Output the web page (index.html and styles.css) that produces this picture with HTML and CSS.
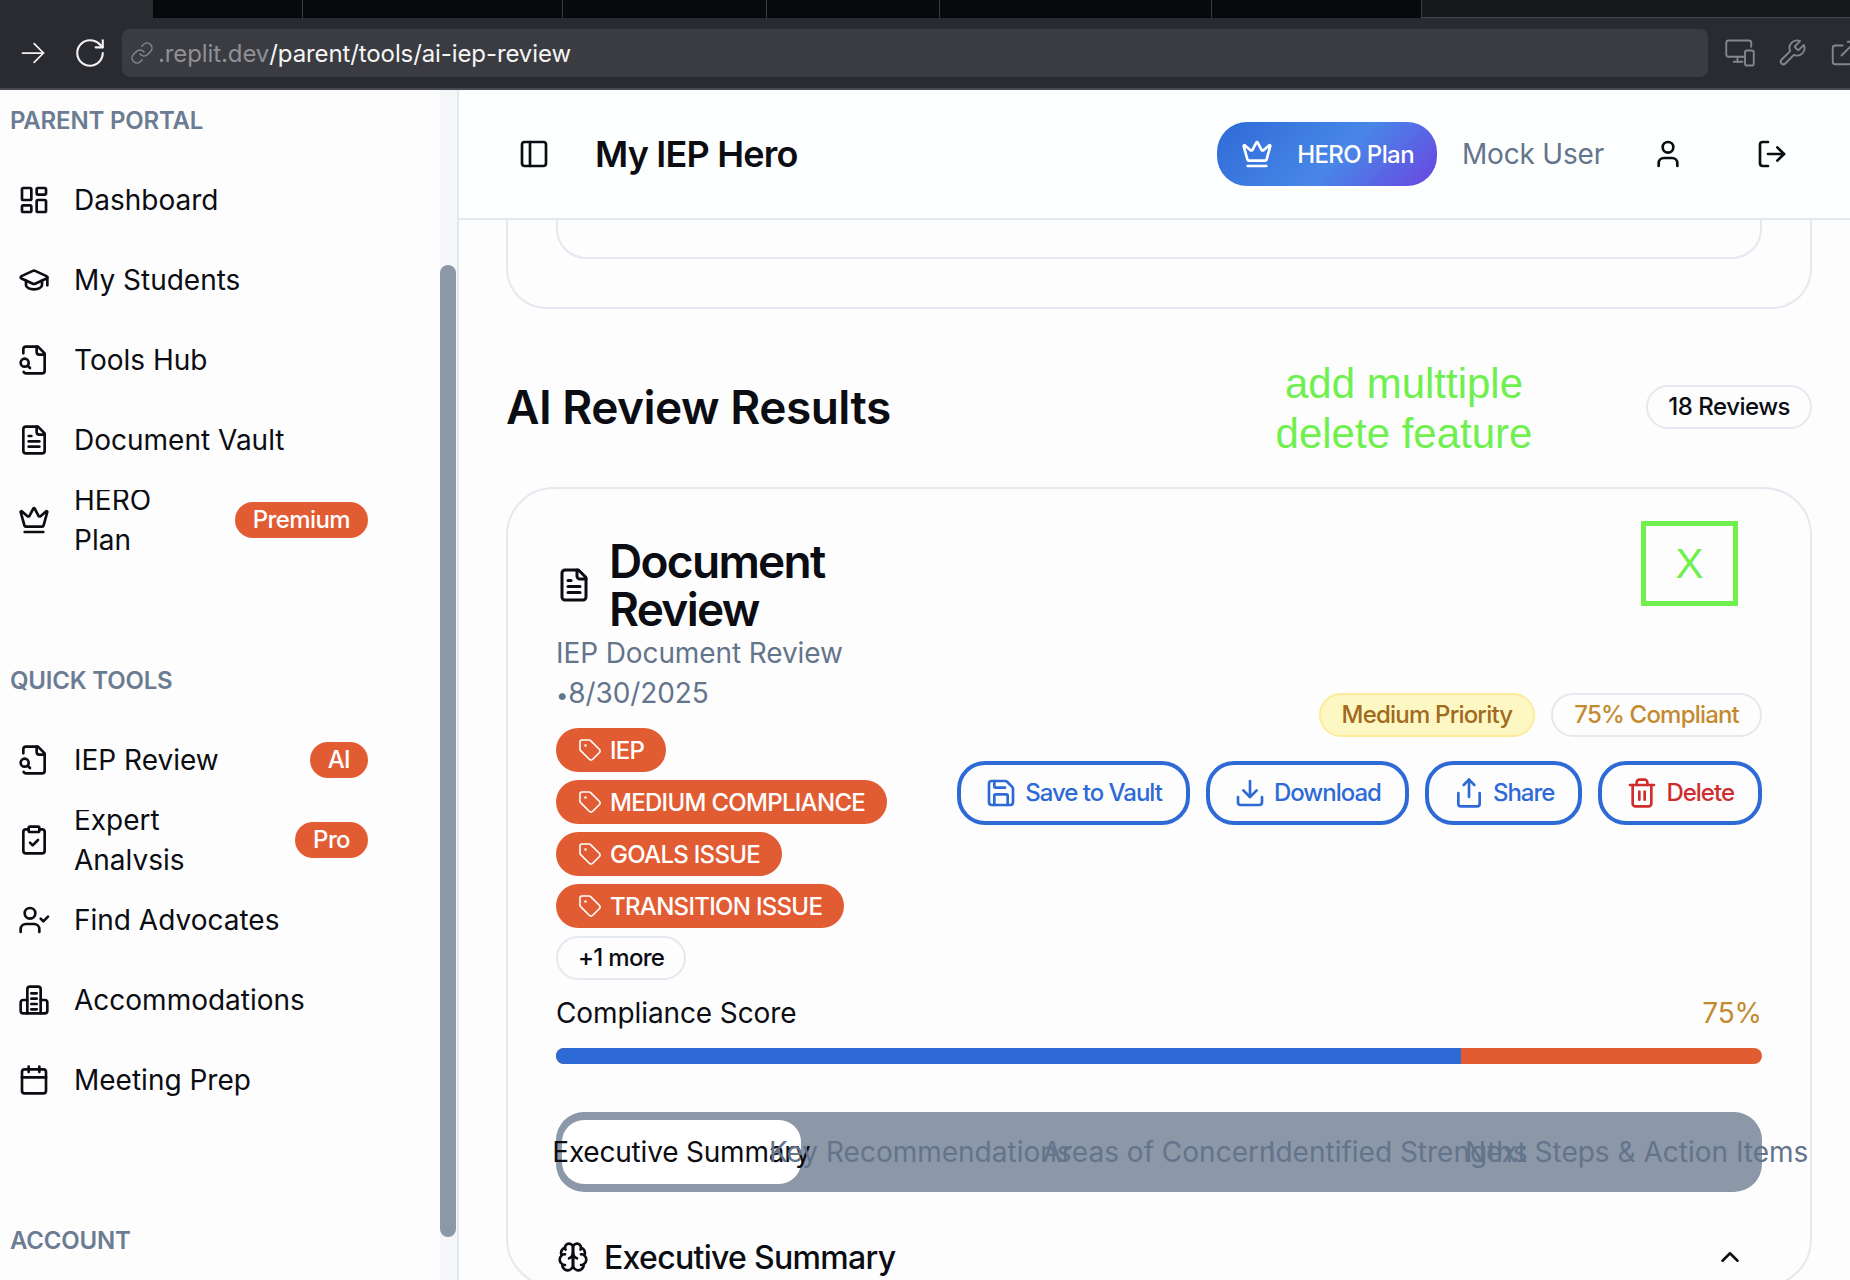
FILE: index.html
```html
<!DOCTYPE html>
<html lang="en">
<head>
    <meta charset="UTF-8">
    <title>My IEP Hero</title>
    <link rel="stylesheet" href="styles.css">
</head>
<body>
    <svg class="icon-defs" xmlns="http://www.w3.org/2000/svg">
        <symbol id="i-dashboard" viewBox="0 0 24 24"><rect x="3" y="3" width="7" height="9" rx="1"/><rect x="14" y="3" width="7" height="5" rx="1"/><rect x="14" y="12" width="7" height="9" rx="1"/><rect x="3" y="16" width="7" height="5" rx="1"/></symbol>
        <symbol id="i-cap" viewBox="0 0 24 24"><path d="M21.42 10.922a1 1 0 0 0-.019-1.838L12.83 5.18a2 2 0 0 0-1.66 0L2.6 9.08a1 1 0 0 0 0 1.832l8.57 3.908a2 2 0 0 0 1.66 0z"/><path d="M22 10v6"/><path d="M6 12.5V16a6 3 0 0 0 12 0v-3.5"/></symbol>
        <symbol id="i-filesearch" viewBox="0 0 24 24"><path d="M14 2v4a2 2 0 0 0 2 2h4"/><path d="M4.268 21a2 2 0 0 0 1.727 1H18a2 2 0 0 0 2-2V7l-5-5H6a2 2 0 0 0-2 2v3"/><path d="m9 18-1.5-1.5"/><circle cx="5" cy="14" r="3"/></symbol>
        <symbol id="i-file" viewBox="0 0 24 24"><path d="M15 2H6a2 2 0 0 0-2 2v16a2 2 0 0 0 2 2h12a2 2 0 0 0 2-2V7Z"/><path d="M14 2v4a2 2 0 0 0 2 2h4"/><path d="M10 9H8"/><path d="M16 13H8"/><path d="M16 17H8"/></symbol>
        <symbol id="i-crown" viewBox="0 0 24 24"><path d="M11.562 3.266a.5.5 0 0 1 .876 0L15.39 8.87a1 1 0 0 0 1.516.294L21.183 5.5a.5.5 0 0 1 .798.519l-2.834 10.246a1 1 0 0 1-.956.734H5.81a1 1 0 0 1-.957-.734L2.02 6.02a.5.5 0 0 1 .798-.519l4.276 3.664a1 1 0 0 0 1.516-.294z"/><path d="M5 21h14"/></symbol>
        <symbol id="i-clipboard" viewBox="0 0 24 24"><rect x="8" y="2" width="8" height="4" rx="1"/><path d="M16 4h2a2 2 0 0 1 2 2v14a2 2 0 0 1-2 2H6a2 2 0 0 1-2-2V6a2 2 0 0 1 2-2h2"/><path d="m9 14 2 2 4-4"/></symbol>
        <symbol id="i-usercheck" viewBox="0 0 24 24"><path d="M16 21v-2a4 4 0 0 0-4-4H6a4 4 0 0 0-4 4v2"/><circle cx="9" cy="7" r="4"/><path d="m17 11 2 2 3.500-3.500"/></symbol>
        <symbol id="i-building" viewBox="0 0 24 24"><path d="M7 22V4a2 2 0 0 1 2-2h6a2 2 0 0 1 2 2v18"/><path d="M7 12H4a2 2 0 0 0-2 2v6a2 2 0 0 0 2 2h16a2 2 0 0 0 2-2v-6a2 2 0 0 0-2-2h-3"/><path d="M10 7h4"/><path d="M10 11h4"/><path d="M10 15h4"/><path d="M10 19h4"/></symbol>
        <symbol id="i-calendar" viewBox="0 0 24 24"><path d="M8 2v4"/><path d="M16 2v4"/><rect x="3" y="4" width="18" height="18" rx="2"/><path d="M3 10h18"/></symbol>
        <symbol id="i-panel" viewBox="0 0 24 24"><rect x="3" y="3" width="18" height="18" rx="2"/><path d="M9 3v18"/></symbol>
        <symbol id="i-user" viewBox="0 0 24 24"><path d="M19 21v-2a4 4 0 0 0-4-4H9a4 4 0 0 0-4 4v2"/><circle cx="12" cy="7" r="4"/></symbol>
        <symbol id="i-logout" viewBox="0 0 24 24"><path d="M9 21H5a2 2 0 0 1-2-2V5a2 2 0 0 1 2-2h4"/><path d="m16 17 5-5-5-5"/><path d="M21 12H9"/></symbol>
        <symbol id="i-tag" viewBox="0 0 24 24"><path d="M12.586 2.586A2 2 0 0 0 11.172 2H4a2 2 0 0 0-2 2v7.172a2 2 0 0 0 .586 1.414l8.704 8.704a2.426 2.426 0 0 0 3.420 0l6.580-6.580a2.426 2.426 0 0 0 0-3.420z"/><circle cx="7.500" cy="7.500" r=".5"/></symbol>
        <symbol id="i-save" viewBox="0 0 24 24"><path d="M15.200 3a2 2 0 0 1 1.400.6l3.800 3.800a2 2 0 0 1 .6 1.400V19a2 2 0 0 1-2 2H5a2 2 0 0 1-2-2V5a2 2 0 0 1 2-2z"/><path d="M17 21v-7a1 1 0 0 0-1-1H8a1 1 0 0 0-1 1v7"/><path d="M7 3v4a1 1 0 0 0 1 1h7"/></symbol>
        <symbol id="i-download" viewBox="0 0 24 24"><path d="M21 15v4a2 2 0 0 1-2 2H5a2 2 0 0 1-2-2v-4"/><path d="m7 10 5 5 5-5"/><path d="M12 15V3"/></symbol>
        <symbol id="i-share" viewBox="0 0 24 24"><path d="M4 12v8a2 2 0 0 0 2 2h12a2 2 0 0 0 2-2v-8"/><path d="m16 6-4-4-4 4"/><path d="M12 2v13"/></symbol>
        <symbol id="i-trash" viewBox="0 0 24 24"><path d="M3 6h18"/><path d="M19 6v14c0 1-1 2-2 2H7c-1 0-2-1-2-2V6"/><path d="M8 6V4c0-1 1-2 2-2h4c1 0 2 1 2 2v2"/><path d="M10 11v6"/><path d="M14 11v6"/></symbol>
        <symbol id="i-brain" viewBox="0 0 24 24"><path d="M12 5a3 3 0 1 0-5.997.125 4 4 0 0 0-2.526 5.770 4 4 0 0 0 .556 6.588A4 4 0 1 0 12 18Z"/><path d="M12 5a3 3 0 1 1 5.997.125 4 4 0 0 1 2.526 5.770 4 4 0 0 1-.556 6.588A4 4 0 1 1 12 18Z"/><path d="M15 13a4.500 4.500 0 0 1-3-4 4.500 4.500 0 0 1-3 4"/><path d="M17.600 6.500A3 3 0 0 0 18 5"/><path d="M6.400 6.500A3 3 0 0 1 6 5"/><path d="M3.500 10.400A4 4 0 0 1 6 10"/><path d="M20.500 10.400A4 4 0 0 0 18 10"/><path d="M6 18a4 4 0 0 1-2-.5"/><path d="M18 18a4 4 0 0 0 2-.5"/></symbol>
        <symbol id="i-chevron" viewBox="0 0 24 24"><path d="m18 15-6-6-6 6"/></symbol>
        <symbol id="i-arrow" viewBox="0 0 24 24"><path d="M3 12h18"/><path d="m13 4 8 8-8 8"/></symbol>
        <symbol id="i-reload" viewBox="0 0 24 24"><path d="M21 12a9 9 0 1 1-9-9c2.520 0 4.930 1 6.740 2.740L21 8"/><path d="M21 3v5h-5"/></symbol>
        <symbol id="i-link" viewBox="0 0 24 24"><path d="M10 13a5 5 0 0 0 7.540.54l3-3a5 5 0 0 0-7.070-7.070l-1.720 1.710"/><path d="M14 11a5 5 0 0 0-7.540-.54l-3 3a5 5 0 0 0 7.070 7.070l1.710-1.710"/></symbol>
        <symbol id="i-devices" viewBox="0 0 24 24"><path d="M16 15H3a2 2 0 0 1-2-2V4a2 2 0 0 1 2-2h16a2 2 0 0 1 2 2v3"/><path d="M7 19h7"/><path d="M10 15v4"/><rect x="16" y="10" width="7" height="12" rx="1.500"/></symbol>
        <symbol id="i-wrench" viewBox="0 0 24 24"><path d="M14.700 6.300a1 1 0 0 0 0 1.400l1.600 1.600a1 1 0 0 0 1.400 0l3.770-3.770a6 6 0 0 1-7.940 7.940l-6.910 6.910a2.120 2.120 0 0 1-3-3l6.910-6.910a6 6 0 0 1 7.940-7.940l-3.760 3.760z"/></symbol>
        <symbol id="i-external" viewBox="0 0 24 24"><path d="M15 3h6v6"/><path d="M10 14 21 3"/><path d="M18 13v6a2 2 0 0 1-2 2H5a2 2 0 0 1-2-2V8a2 2 0 0 1 2-2h6"/></symbol>
    </svg>

    <div class="browser-tabs">
        <div class="tab-spacer"></div>
        <div class="tab tab-1"></div>
        <div class="tab tab-2"></div>
        <div class="tab tab-3"></div>
        <div class="tab tab-4"></div>
        <div class="tab tab-5"></div>
        <div class="tab tab-6"></div>
        <div class="tab-rest"></div>
    </div>
    <div class="browser-bar">
        <span class="orange-sliver"></span>
        <svg class="bar-icon forward"><use href="#i-arrow"/></svg>
        <svg class="bar-icon reload"><use href="#i-reload"/></svg>
        <div class="url-box">
            <svg class="link-icon"><use href="#i-link"/></svg>
            <span class="url-dim">.replit.dev</span><span class="url-path">/parent/tools/ai-iep-review</span>
        </div>
        <svg class="bar-icon tool"><use href="#i-devices"/></svg>
        <svg class="bar-icon tool"><use href="#i-wrench"/></svg>
        <svg class="bar-icon tool"><use href="#i-external"/></svg>
    </div>

    <div class="app">
        <aside class="sidebar">
            <div class="side-scroll">
                <div class="side-label">PARENT PORTAL</div>
                <ul class="side-list">
                    <li class="side-item"><svg class="side-icon"><use href="#i-dashboard"/></svg><span class="side-text">Dashboard</span></li>
                    <li class="side-item"><svg class="side-icon"><use href="#i-cap"/></svg><span class="side-text">My Students</span></li>
                    <li class="side-item"><svg class="side-icon"><use href="#i-filesearch"/></svg><span class="side-text">Tools Hub</span></li>
                    <li class="side-item"><svg class="side-icon"><use href="#i-file"/></svg><span class="side-text">Document Vault</span></li>
                    <li class="side-item"><svg class="side-icon"><use href="#i-crown"/></svg><span class="side-text narrow">HERO Plan</span><span class="side-badge">Premium</span></li>
                </ul>
                <div class="side-label quick">QUICK TOOLS</div>
                <ul class="side-list">
                    <li class="side-item"><svg class="side-icon"><use href="#i-filesearch"/></svg><span class="side-text">IEP Review</span><span class="side-badge">AI</span></li>
                    <li class="side-item"><svg class="side-icon"><use href="#i-clipboard"/></svg><span class="side-text narrow">Expert Analysis</span><span class="side-badge">Pro</span></li>
                    <li class="side-item"><svg class="side-icon"><use href="#i-usercheck"/></svg><span class="side-text">Find Advocates</span></li>
                    <li class="side-item"><svg class="side-icon"><use href="#i-building"/></svg><span class="side-text">Accommodations</span></li>
                    <li class="side-item"><svg class="side-icon"><use href="#i-calendar"/></svg><span class="side-text">Meeting Prep</span></li>
                </ul>
                <div class="side-label account">ACCOUNT</div>
            </div>
            <div class="side-track"><div class="side-thumb"></div></div>
        </aside>

        <div class="main">
            <header class="top-bar">
                <svg class="top-icon panel"><use href="#i-panel"/></svg>
                <div class="app-title">My IEP Hero</div>
                <div class="hero-btn"><svg class="hero-crown"><use href="#i-crown"/></svg>HERO Plan</div>
                <div class="user-name">Mock User</div>
                <svg class="top-icon user"><use href="#i-user"/></svg>
                <svg class="top-icon logout"><use href="#i-logout"/></svg>
            </header>

            <div class="content">
                <div class="prev-card"><div class="prev-inner"></div></div>

                <div class="results-head">
                    <h2 class="results-title">AI Review Results</h2>
                    <div class="count-pill">18 Reviews</div>
                    <div class="note">add multtiple<br>delete feature</div>
                </div>

                <section class="review-card">
                    <div class="x-box">X</div>
                    <div class="review-top">
                        <div class="review-left">
                            <div class="review-title-row">
                                <svg class="title-icon"><use href="#i-file"/></svg>
                                <h3 class="review-title">Document Review</h3>
                            </div>
                            <div class="review-sub">IEP Document Review <span class="dot">•</span>8/30/2025</div>
                            <div class="tags">
                                <span class="tag"><svg class="tag-icon"><use href="#i-tag"/></svg>IEP</span>
                                <span class="tag"><svg class="tag-icon"><use href="#i-tag"/></svg>MEDIUM COMPLIANCE</span>
                                <span class="tag"><svg class="tag-icon"><use href="#i-tag"/></svg>GOALS ISSUE</span>
                                <span class="tag"><svg class="tag-icon"><use href="#i-tag"/></svg>TRANSITION ISSUE</span>
                                <span class="tag-more">+1 more</span>
                            </div>
                        </div>
                        <div class="review-right">
                            <div class="status-row">
                                <span class="status priority">Medium Priority</span>
                                <span class="status compliant">75% Compliant</span>
                            </div>
                            <div class="action-row">
                                <button class="action"><svg class="action-icon"><use href="#i-save"/></svg>Save to Vault</button>
                                <button class="action"><svg class="action-icon"><use href="#i-download"/></svg>Download</button>
                                <button class="action"><svg class="action-icon"><use href="#i-share"/></svg>Share</button>
                                <button class="action danger"><svg class="action-icon"><use href="#i-trash"/></svg>Delete</button>
                            </div>
                        </div>
                    </div>

                    <div class="score-row">
                        <span>Compliance Score</span>
                        <span class="score-value">75%</span>
                    </div>
                    <div class="score-bar"><div class="score-fill" style="width: 75%"></div></div>

                    <div class="tab-list">
                        <div class="tab-btn active">Executive Summary</div>
                        <div class="tab-btn">Key Recommendations</div>
                        <div class="tab-btn">Areas of Concern</div>
                        <div class="tab-btn">Identified Strengths</div>
                        <div class="tab-btn">Next Steps &amp; Action Items</div>
                    </div>

                    <div class="summary-head">
                        <svg class="summary-icon"><use href="#i-brain"/></svg>
                        <span class="summary-title">Executive Summary</span>
                        <svg class="summary-chevron"><use href="#i-chevron"/></svg>
                    </div>
                </section>
            </div>
        </div>
    </div>
</body>
</html>
```

FILE: styles.css
```css
* {
    box-sizing: border-box;
}

html, body {
    height: 100%;
}

body {
    margin: 0;
    overflow: hidden;
    background: #fdfdfe;
    color: #0b0d12;
    font-family: Inter, "Liberation Sans", sans-serif;
}

svg {
    fill: none;
    stroke: currentColor;
    stroke-width: 2;
    stroke-linecap: round;
    stroke-linejoin: round;
    flex-shrink: 0;
}

.icon-defs {
    display: none;
}

/* browser chrome */
.browser-tabs {
    display: flex;
    height: 18px;
    background: #2a2b30;
}

.tab-spacer {
    width: 153px;
}

.tab {
    background: #08090c;
    border-right: 1px solid #3a3b40;
}

.tab-1 { width: 150px; }
.tab-2 { width: 260px; }
.tab-3 { width: 204px; }
.tab-4 { width: 173px; }
.tab-5 { width: 272px; }
.tab-6 { width: 210px; }

.tab-rest {
    flex: 1;
    background: #17181c;
    border-bottom: 1px solid #46474c;
}

.browser-bar {
    display: flex;
    align-items: center;
    height: 72px;
    background: #2a2b30;
    border-bottom: 2px solid #474a53;
    overflow: hidden;
}

.orange-sliver {
    width: 3px;
    height: 39px;
    margin-right: 19px;
    background: #d8701f;
}

.bar-icon {
    width: 28px;
    height: 28px;
    color: #f2f2f2;
    stroke-width: 1.5;
}

.forward {
    margin-right: 26px;
}

.reload {
    width: 34px;
    height: 34px;
    margin-right: 15px;
}

.url-box {
    display: flex;
    align-items: center;
    flex: 0 0 1586px;
    height: 48px;
    margin-right: 17px;
    padding-left: 8px;
    background: #3b3c42;
    border-radius: 8px;
    font-size: 24px;
    letter-spacing: -0.1px;
}

.link-icon {
    width: 24px;
    height: 24px;
    margin-right: 4px;
    color: #85868a;
    stroke-width: 1.5;
}

.url-dim {
    color: #8f9094;
}

.url-path {
    color: #f5f5f5;
}

.tool {
    width: 30px;
    height: 30px;
    margin-right: 22px;
    color: #85868a;
}

/* layout */
.app {
    display: flex;
    height: 1190px;
}

.sidebar {
    display: flex;
    flex: 0 0 459px;
    background: #fdfdfe;
    border-right: 2px solid #e4e8ef;
    overflow: hidden;
}

.side-scroll {
    flex: 1;
    padding-top: 19px;
    overflow: hidden;
}

.side-track {
    width: 17px;
    padding-top: 175px;
    background: #f5f6f9;
}

.side-thumb {
    width: 16px;
    height: 972px;
    background: #8c97a8;
    border-radius: 8px;
}

.side-label {
    height: 24px;
    padding-left: 10px;
    color: #6b7c93;
    font-size: 24px;
    font-weight: 600;
    letter-spacing: -0.2px;
    line-height: 24px;
}

.side-label.quick,
.side-label.account {
    margin-top: 119px;
}

.side-list {
    margin: 37px 0 0;
    padding: 0 0 0 18px;
    list-style: none;
}

.side-item {
    display: flex;
    align-items: center;
    width: 350px;
    height: 60px;
    margin-bottom: 20px;
    font-size: 28px;
    line-height: 40px;
    overflow: hidden;
}

.side-icon {
    width: 32px;
    height: 32px;
    margin-right: 24px;
}

.side-text {
    white-space: nowrap;
}

.side-text.narrow {
    width: 120px;
    white-space: normal;
}

.side-badge {
    flex-shrink: 0;
    margin-left: auto;
    padding: 0 18px;
    background: #e25c33;
    border-radius: 18px;
    color: #fff;
    font-size: 24px;
    font-weight: 500;
    letter-spacing: -0.6px;
    line-height: 36px;
}

/* header */
.main {
    flex: 1;
    min-width: 0;
}

.top-bar {
    display: flex;
    align-items: center;
    height: 130px;
    padding-left: 59px;
    background: #fdfefe;
    border-bottom: 2px solid #e4e8ef;
}

.top-icon {
    width: 32px;
    height: 32px;
}

.panel {
    margin-right: 45px;
}

.app-title {
    flex: 1;
    font-size: 36px;
    font-weight: 600;
    letter-spacing: -0.8px;
}

.hero-btn {
    display: flex;
    align-items: center;
    height: 64px;
    padding: 0 23px 0 24px;
    background: linear-gradient(135deg, #2e6bd6 0%, #4887e8 55%, #6b44e0 100%);
    border-radius: 30px;
    color: #fff;
    font-size: 24px;
    font-weight: 500;
    letter-spacing: -0.6px;
}

.hero-crown {
    width: 32px;
    height: 32px;
    margin-right: 24px;
}

.user-name {
    margin-left: 25px;
    color: #64748b;
    font-size: 28px;
    letter-spacing: -0.2px;
}

.user {
    margin-left: 48px;
}

.logout {
    margin-left: 72px;
    margin-right: 62px;
}

/* page content */
.content {
    padding: 0 38px 0 47px;
}

.prev-card {
    height: 89px;
    padding: 0 48px;
    background: #fdfdfe;
    border: 2px solid #e4e8ef;
    border-top: none;
    border-radius: 0 0 40px 40px;
}

.prev-inner {
    height: 39px;
    border: 2px solid #e4e8ef;
    border-top: none;
    border-radius: 0 0 30px 30px;
}

.results-head {
    position: relative;
    display: flex;
    align-items: center;
    justify-content: space-between;
    height: 178px;
    padding-top: 18px;
}

.results-title {
    margin: 0;
    font-size: 46px;
    font-weight: 600;
    letter-spacing: -0.5px;
}

.count-pill {
    height: 44px;
    padding: 0 20px;
    border: 2px solid #e4e8ef;
    border-radius: 22px;
    font-size: 24px;
    font-weight: 500;
    letter-spacing: -0.5px;
    line-height: 40px;
}

.note {
    position: absolute;
    left: 748px;
    top: 50px;
    width: 300px;
    color: #6ff04f;
    font-family: "Liberation Sans", sans-serif;
    font-size: 42px;
    line-height: 50px;
    text-align: center;
}

.review-card {
    position: relative;
    padding: 48px 48px 0;
    height: 800px;
    background: #fdfdfe;
    border: 2px solid #e4e8ef;
    border-radius: 48px;
}

.x-box {
    position: absolute;
    left: 1133px;
    top: 32px;
    width: 97px;
    height: 85px;
    border: 5px solid #6ff04f;
    color: #6ff04f;
    font-family: "Liberation Sans", sans-serif;
    font-size: 42px;
    line-height: 75px;
    text-align: center;
}

.review-top {
    display: flex;
    align-items: center;
    justify-content: space-between;
}

.review-left {
    flex: 0 0 360px;
}

.review-title-row {
    display: flex;
    align-items: center;
}

.title-icon {
    width: 36px;
    height: 36px;
    margin-right: 17px;
}

.review-title {
    margin: 0;
    font-size: 46px;
    font-weight: 600;
    letter-spacing: -1.7px;
    line-height: 48px;
}

.review-sub {
    color: #64748b;
    font-size: 28px;
    letter-spacing: -0.1px;
    line-height: 40px;
}

.dot {
    font-size: 22px;
    line-height: 0;
}

.tags {
    display: flex;
    flex-wrap: wrap;
    gap: 8px;
    margin-top: 15px;
}

.tag {
    display: flex;
    align-items: center;
    height: 44px;
    padding: 0 22px;
    background: #e25c33;
    border-radius: 22px;
    color: #fff;
    font-size: 24px;
    font-weight: 500;
    letter-spacing: -0.7px;
    white-space: nowrap;
}

.tag-icon {
    width: 24px;
    height: 24px;
    margin-right: 8px;
    stroke-width: 1.6;
}

.tag-more {
    height: 44px;
    padding: 0 20px;
    border: 2px solid #e4e8ef;
    border-radius: 22px;
    font-size: 24px;
    font-weight: 500;
    letter-spacing: -0.7px;
    line-height: 40px;
}

.review-right {
    display: flex;
    flex-direction: column;
    align-items: flex-end;
}

.status-row {
    display: flex;
    gap: 16px;
    margin-bottom: 24px;
}

.status {
    height: 44px;
    padding: 0 21px;
    border: 2px solid;
    border-radius: 22px;
    font-size: 24px;
    font-weight: 500;
    letter-spacing: -0.8px;
    line-height: 40px;
}

.priority {
    background: #fdf7c3;
    border-color: #fcec9a;
    color: #a16a1e;
}

.compliant {
    border-color: #e4e8ef;
    color: #c48a2f;
}

.action-row {
    display: flex;
    gap: 16px;
}

.action {
    display: flex;
    align-items: center;
    height: 64px;
    padding: 0 24px;
    background: #fdfdfe;
    border: 4px solid #2d6ad6;
    border-radius: 28px;
    color: #2d6ad6;
    font-family: inherit;
    font-size: 24px;
    font-weight: 500;
    letter-spacing: -1px;
}

.action-icon {
    width: 32px;
    height: 32px;
    margin-right: 8px;
}

.danger {
    color: #cf2e2e;
}

.score-row {
    display: flex;
    justify-content: space-between;
    margin-top: 13px;
    font-size: 28px;
    letter-spacing: -0.1px;
    line-height: 40px;
}

.score-value {
    color: #c48a2f;
}

.score-bar {
    height: 16px;
    margin-top: 15px;
    background: #e25c33;
    border-radius: 8px;
    overflow: hidden;
}

.score-fill {
    height: 100%;
    background: #2d6ad6;
}

.tab-list {
    display: grid;
    grid-template-columns: repeat(5, 1fr);
    height: 80px;
    margin-top: 48px;
    padding: 8px 6px;
    background: #8c97a8;
    border-radius: 28px;
}

.tab-btn {
    display: flex;
    align-items: center;
    justify-content: center;
    min-width: 0;
    color: #64748b;
    font-size: 28px;
    white-space: nowrap;
}

.tab-btn.active {
    background: #fff;
    border-radius: 22px;
    color: #0b0d12;
    letter-spacing: -0.2px;
}

.summary-head {
    display: flex;
    align-items: center;
    height: 40px;
    margin-top: 45px;
}

.summary-icon {
    width: 32px;
    height: 32px;
    margin-left: 1px;
    margin-right: 15px;
}

.summary-title {
    flex: 1;
    font-size: 32px;
    font-weight: 500;
    letter-spacing: -0.7px;
}

.summary-chevron {
    width: 30px;
    height: 30px;
    margin-right: 17px;
}
```
